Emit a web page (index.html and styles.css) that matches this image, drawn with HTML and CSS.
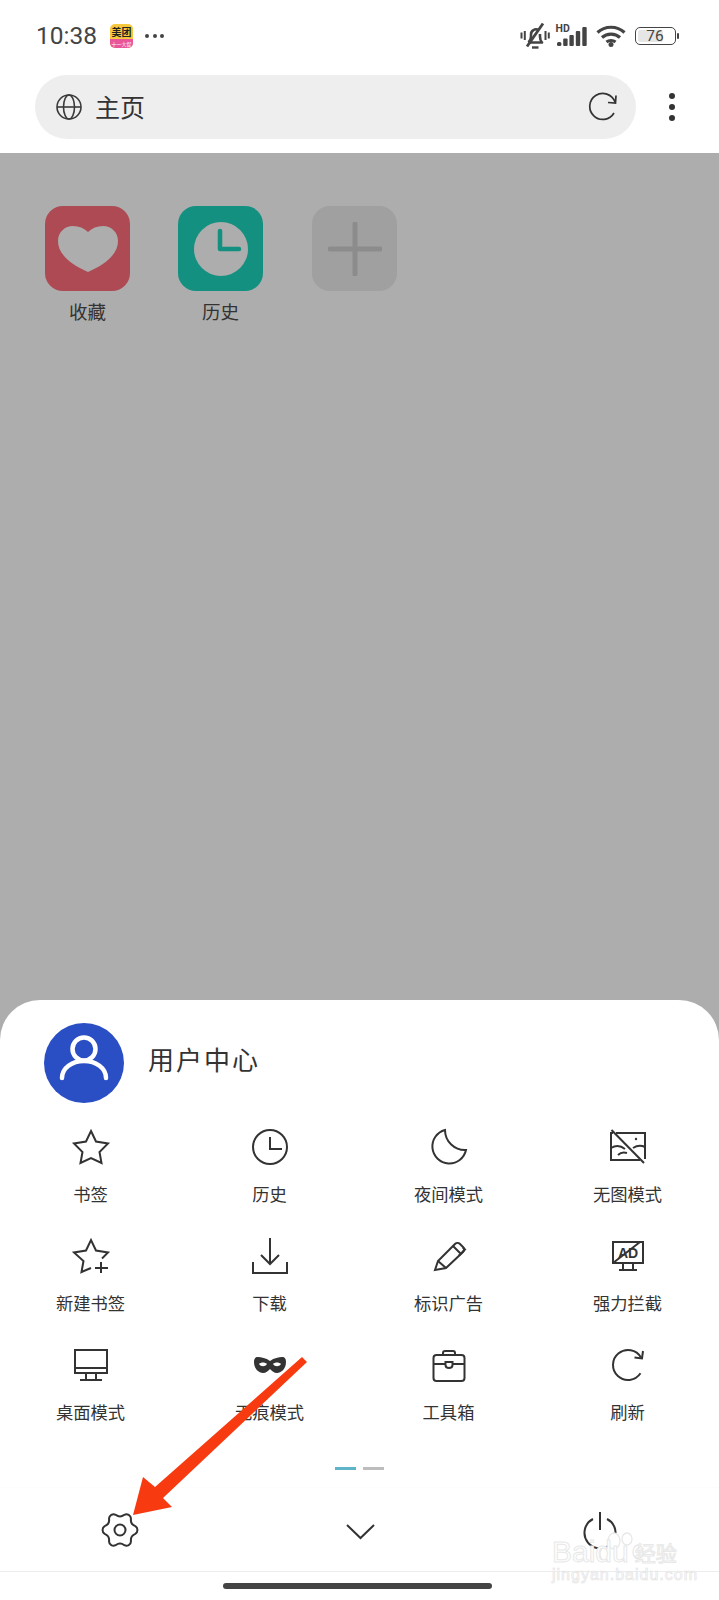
FILE: index.html
```html
<!DOCTYPE html>
<html lang="zh-CN">
<head>
<meta charset="utf-8">
<title>主页</title>
<link rel="stylesheet" href="styles.css">
</head>
<body>
<div class="page">
  <header class="top">
    <div class="status">
      <div class="status-left">
        <span class="time">10:38</span>
        <span class="appicon"><span class="appicon-a">美团</span><span class="appicon-b">十一大促</span></span>
        <span class="more-dots"><i></i><i></i><i></i></span>
      </div>
      <div class="status-right">
        <svg class="s-bell" viewBox="0 0 30 30" width="30" height="30"><path d="M8.500 21.500c1.500-1.500 2.500-3 2.500-6v-2a5 5 0 0 1 7.500-4.500M20 13v2.500c0 3 .5 4.500 2 6H9" fill="none" stroke="#444" stroke-width="2.600" stroke-linejoin="round"/><path d="M7 25.500 23 2.500" stroke="#444" stroke-width="2.800"/><path d="M12 26.500h6.500" stroke="#444" stroke-width="2.400"/><path d="M1.500 11.500v6M4.800 10v9M25.500 10v9M28.800 11.500v6" stroke="#444" stroke-width="2"/></svg>
        <span class="signal">
          <span class="hd">HD</span>
          <svg viewBox="0 0 30 20" width="30" height="20"><rect x="0" y="16" width="4.400" height="4" rx="1.500" fill="#444"/><rect x="6.200" y="12.500" width="4.400" height="7.500" rx="1" fill="#444"/><rect x="12.400" y="9" width="4.400" height="11" rx="1" fill="#444"/><rect x="18.800" y="5" width="4.400" height="15" rx="1" fill="#444"/><rect x="25.300" y="1" width="4.400" height="19" rx="1" fill="#444"/></svg>
        </span>
        <svg class="s-wifi" viewBox="0 0 30 22" width="30" height="22"><path d="M1.500 7.500C9 .5 21 .5 28.500 7.500M6 12.500c5-4.500 13-4.500 18 0M10.500 17c2.500-2 6.500-2 9 0" fill="none" stroke="#444" stroke-width="3.200"/><circle cx="15" cy="19.500" r="2.500" fill="#444"/></svg>
        <span class="battery"><span class="battery-fill"></span><span class="battery-num">76</span></span>
        <span class="battery-nub"></span>
      </div>
    </div>
    <div class="addr-row">
      <div class="addr">
        <svg class="globe" viewBox="0 0 26 26" width="26" height="26" fill="none" stroke="#3a3a3a" stroke-width="1.600"><circle cx="13" cy="13" r="12"/><ellipse cx="13" cy="13" rx="5.500" ry="12"/><path d="M1 13h24"/></svg>
        <span class="addr-text">主页</span>
        <svg class="reload" viewBox="0 0 30 30" width="30" height="30" fill="none" stroke="#333" stroke-width="1.700"><path d="M26 21a13 13 0 1 1 1-11"/><path d="M28 3.500 27.500 11l-7.500-.5"/></svg>
      </div>
      <span class="kebab"><i></i><i></i><i></i></span>
    </div>
  </header>

  <main class="home">
    <div class="tile-wrap">
      <div class="tile tile-red"><svg viewBox="0 0 60 46" width="60" height="46"><path d="M30 46C12 38 0 28 0 15 0 6 7 0 15 0c6 0 11 2 15 6 4-4 9-6 15-6 8 0 15 6 15 15 0 13-12 23-30 31Z" fill="#adadad"/></svg></div>
      <span class="tile-label">收藏</span>
    </div>
    <div class="tile-wrap">
      <div class="tile tile-teal"><svg viewBox="0 0 54 54" width="54" height="54"><circle cx="27" cy="27" r="27" fill="#adadad"/><path d="M26 9v18h19" fill="none" stroke="#149080" stroke-width="4.500" stroke-linecap="round" stroke-linejoin="round"/></svg></div>
      <span class="tile-label">历史</span>
    </div>
    <div class="tile-wrap tile-wrap-add">
      <div class="tile tile-gray"><svg viewBox="0 0 54 54" width="54" height="54"><path d="M27 2v50M2 27h50" stroke="#8c8c8c" stroke-width="5" stroke-linecap="round"/></svg></div>
    </div>
  </main>

  <section class="sheet">
    <div class="user">
      <div class="avatar"><svg class="avatar-ic" viewBox="0 0 50 50" width="50" height="50" fill="none" stroke="#fff" stroke-width="4.500" stroke-linecap="round"><circle cx="25" cy="11" r="11.500"/><path d="M3 40c0-10 10-17 22-17s22 7 22 17"/></svg></div>
      <span class="user-name">用户中心</span>
    </div>
    <div class="grid">
      <div class="cell"><svg class="ic" viewBox="0 0 36 36"><path d="M18 2l5 10.500 12 2-8.500 8.500 2 11L18 29 7.500 34l2-11L1 14.500l12-2Z"/></svg><span class="cell-label">书签</span></div>
      <div class="cell"><svg class="ic" viewBox="0 0 36 36"><circle cx="18" cy="18" r="17"/><path d="M18 8v12h12"/></svg><span class="cell-label">历史</span></div>
      <div class="cell"><svg class="ic" viewBox="0 0 36 36"><path d="M14 1a17 17 0 1 0 21 20A20 20 0 0 1 14 1Z"/></svg><span class="cell-label">夜间模式</span></div>
      <div class="cell"><svg class="ic" viewBox="0 0 36 36"><path d="M6 4h29v26M30 31H1V4h2"/><path d="M1.500 1 34 34"/><path d="M1 19c5-3 9-3 14 1M8 26c3-3 6-3 9-2M23 19c3-2 8-3 12-1"/><circle cx="26" cy="10" r="1.200" fill="#333" stroke="none"/></svg><span class="cell-label">无图模式</span></div>

      <div class="cell"><svg class="ic" viewBox="0 0 36 36"><path d="M18 30 8.500 34l2-11L1 14.500l12-2L18 2l5 10.500 12 2-6 6"/><path d="M28 24v11M22 30h13"/></svg><span class="cell-label">新建书签</span></div>
      <div class="cell"><svg class="ic" viewBox="0 0 36 36"><path d="M18 0v26M9 17l9 9 9-9"/><path d="M1 24v11h34V24"/></svg><span class="cell-label">下载</span></div>
      <div class="cell"><svg class="ic" viewBox="0 0 36 36"><path d="M4 32l3-9L24 6c1.500-1.500 3.500-1.500 5 0l3 3c1.500 1.500 1.500 3.500 0 5L15 30Z"/><path d="M7 23l8 7M22 8l8 8M32 9.500l2 2-6 6"/></svg><span class="cell-label">标识广告</span></div>
      <div class="cell"><svg class="ic" viewBox="0 0 36 36"><path d="M3 4h30v21H3ZM13 25v6M23 25v6M9 32h18"/><path d="M3 25 30 4"/><text class="ic-text" x="18" y="20" text-anchor="middle">AD</text></svg><span class="cell-label">强力拦截</span></div>

      <div class="cell"><svg class="ic" viewBox="0 0 36 36"><path d="M2 3h32v23H2ZM2 21h32M13 26v7M23 26v7M7 33h22"/></svg><span class="cell-label">桌面模式</span></div>
      <div class="cell"><svg class="ic" viewBox="0 0 36 36"><path d="M18 14C14 11 9 10 6 10 3 10 2 12 2 15c0 7 5 11 9 11 3 0 5-2 7-4 2 2 4 4 7 4 4 0 9-4 9-11 0-3-1-5-4-5-3 0-8 1-12 4Zm-11 3c2-2 6-2 8 0-2 3-6 3-8 0Zm22 0c-2-2-6-2-8 0 2 3 6 3 8 0Z" class="ic-fill" fill-rule="evenodd"/></svg><span class="cell-label">无痕模式</span></div>
      <div class="cell"><svg class="ic" viewBox="0 0 36 36"><rect x="2.500" y="8" width="31" height="26" rx="3"/><path d="M12 8V6c0-1 1-2 2-2h8c1 0 2 1 2 2v2M2.500 17h12M21.500 17h12M14.500 15h7v3c0 4-7 4-7 0Z"/></svg><span class="cell-label">工具箱</span></div>
      <div class="cell"><svg class="ic" viewBox="0 0 36 36"><path d="M30.500 26.300A15 15 0 1 1 31 10.500"/><path d="M33 4l-1 7.500-7.500-1"/></svg><span class="cell-label">刷新</span></div>
    </div>
    <div class="pager"><span class="pg pg-on"></span><span class="pg"></span></div>
    <div class="tools">
      <svg class="tool" viewBox="-1 -1 38 38"><path d="M33.330 14.180A4.500 4.500 0 0 1 33.330 21.820 7 7 0 0 0 28.980 29.370 4.500 4.500 0 0 1 22.360 33.190 7 7 0 0 0 13.640 33.190 4.500 4.500 0 0 1 7.020 29.370 7 7 0 0 0 2.670 21.820 4.500 4.500 0 0 1 2.670 14.180 7 7 0 0 0 7.020 6.630 4.500 4.500 0 0 1 13.640 2.810 7 7 0 0 0 22.360 2.810 4.500 4.500 0 0 1 28.980 6.630 7 7 0 0 0 33.330 14.180Z"/><circle cx="18" cy="18" r="5.500"/></svg>
      <svg class="tool" viewBox="-1 -1 38 38"><path d="M5 13l13.500 13L32 13"/></svg>
      <svg class="tool" viewBox="-1 -1 38 38"><path d="M11 7a15.500 15.500 0 1 0 14 0"/><path d="M18 0v18"/></svg>
    </div>
    <div class="nav"><span class="home-bar"></span></div>
  </section>

  <svg class="arrow" viewBox="0 0 180 165" width="180" height="165"><path d="M172 2l5 5L33 143l9 9-39 8 10-38 12 10Z" fill="#f83a10"/></svg>

  <div class="mark">
    <svg class="paw" viewBox="0 0 50 50" width="50" height="50" fill="#fff" stroke="#e8e8e8" stroke-width="1.300"><ellipse cx="11" cy="24" rx="5" ry="7"/><ellipse cx="20" cy="11" rx="6" ry="8"/><ellipse cx="33" cy="9" rx="5" ry="6"/><ellipse cx="44" cy="22" rx="5" ry="7"/></svg>
    <div class="mark-line"><span class="mark-bd">Baidu</span><span class="mark-cn">经验</span></div>
    <div class="mark-url">jingyan.baidu.com</div>
  </div>
</div>
</body>
</html>
```

FILE: styles.css
```css
* { box-sizing: border-box; }
html, body { margin: 0; padding: 0; }
body { font-family: "Noto Sans CJK SC", Roboto, sans-serif; background: #fff; }
.page { position: relative; width: 719px; height: 1600px; overflow: hidden; background: #adadad; display: flex; flex-direction: column; }

.top { height: 153px; background: #fff; flex: none; }
.status { height: 75px; padding: 0 40px 4px 36px; display: flex; align-items: center; justify-content: space-between; }
.status-left, .status-right { display: flex; align-items: center; }
.time { font-family: Roboto, sans-serif; font-size: 24.500px; color: #444; }
.appicon { width: 23px; height: 24px; margin-left: 13px; border-radius: 5px; overflow: hidden; display: flex; flex-direction: column; align-items: center; background: #f6c83e; }
.appicon-a { font-size: 10px; line-height: 15px; height: 15px; font-weight: 700; color: #222; }
.appicon-b { width: 100%; height: 9px; background: #e8559a; color: #fff; font-size: 5px; line-height: 9px; text-align: center; white-space: nowrap; overflow: hidden; }
.more-dots { display: flex; gap: 3.500px; margin-left: 12px; }
.more-dots i { width: 4px; height: 4px; border-radius: 50%; background: #444; }
.s-bell { margin-right: 7px; }
.signal { position: relative; width: 31px; height: 21px; display: flex; align-items: flex-end; margin-right: 8px; }
.hd { position: absolute; left: -1px; top: -2px; font-family: Roboto, sans-serif; font-weight: 700; font-size: 10.500px; line-height: 11px; color: #444; }
.s-wifi { margin-right: 9px; }
.battery { position: relative; width: 41px; height: 18px; border: 1.500px solid #444; border-radius: 5px; display: flex; align-items: center; justify-content: center; }
.battery-fill { position: absolute; left: 2px; top: 2px; bottom: 2px; width: 25px; background: #e6e6e6; border-radius: 2px; }
.battery-num { position: relative; font-family: Roboto, sans-serif; font-size: 15.500px; line-height: 16px; color: #444; }
.battery-nub { width: 2px; height: 6px; margin-left: 1.500px; background: #444; border-radius: 1px; }

.addr-row { display: flex; align-items: center; padding-left: 35px; }
.addr { width: 601px; height: 64px; border-radius: 32px; background: #eee; display: flex; align-items: center; padding: 0 18px 0 21px; }
.globe { flex: none; }
.addr-text { margin-left: 13px; margin-bottom: 2px; font-size: 25px; color: #333; line-height: 32px; flex: 1; }
.reload { flex: none; }
.kebab { margin-left: 33px; display: flex; flex-direction: column; gap: 5px; }
.kebab i { width: 6px; height: 6px; border-radius: 50%; background: #333; }

.home { height: 847px; flex: none; display: flex; align-items: flex-start; padding: 53px 0 0 45px; gap: 48px; }
.tile-wrap { width: 85px; display: flex; flex-direction: column; align-items: center; }
.tile-wrap-add { margin-left: 1px; }
.tile { width: 85px; height: 85px; border-radius: 18px; display: flex; align-items: center; justify-content: center; }
.tile-red { background: #ad4a54; }
.tile-teal { background: #149080; }
.tile-gray { background: #a0a0a0; }
.tile-label { margin-top: 7px; font-size: 18.500px; line-height: 26px; color: #333; }

.sheet { position: relative; height: 600px; flex: none; background: #fff; border-radius: 40px 40px 0 0; display: flex; flex-direction: column; }
.user { display: flex; align-items: center; padding: 23px 0 0 44px; }
.avatar { width: 80px; height: 80px; border-radius: 50%; background: #2a4ec4; display: flex; align-items: center; justify-content: center; }
.avatar-ic { overflow: visible; }
.user-name { margin: 0 0 8px 24px; font-size: 26px; letter-spacing: 2px; color: #333; line-height: 34px; }
.grid { display: grid; grid-template-columns: repeat(4, 179px); grid-auto-rows: 109px; padding: 26px 0 0 1px; }
.cell { display: flex; flex-direction: column; align-items: center; }
.ic { width: 36px; height: 36px; fill: none; stroke: #333; stroke-width: 2; overflow: visible; }
.ic-fill { fill: #333; stroke: none; }
.ic-text { font-family: "Liberation Sans", sans-serif; font-weight: 700; font-size: 14px; fill: #333; stroke: none; }
.cell-label { margin-top: 16px; font-size: 17.300px; line-height: 25px; color: #333; white-space: nowrap; }
.pager { display: flex; gap: 7px; justify-content: center; padding-top: 11px; height: 21px; }
.pg { width: 21px; height: 2.500px; background: #bdbdbd; }
.pg-on { background: #5fb4c9; }
.tools { height: 85px; margin-top: 10px; border-top: 1px solid #fcfcfc; border-bottom: 1px solid #ececec; display: grid; grid-template-columns: repeat(3, 240px); align-items: center; justify-items: center; }
.tool { width: 38px; height: 38px; fill: none; stroke: #333; stroke-width: 2; }
.nav { flex: 1; display: flex; justify-content: center; padding: 11px 4px 0 0; }
.home-bar { width: 269px; height: 6px; background: #444; border-radius: 3px; }

.arrow { position: absolute; left: 130px; top: 1355px; }
.mark { position: absolute; left: 552px; top: 1530px; width: 130px; height: 55px; }
.paw { position: absolute; left: 42px; top: 0; }
.mark-line { position: absolute; left: 0; top: 4px; display: flex; align-items: center; gap: 6px; }
.mark-bd { font-family: "Liberation Sans", sans-serif; font-size: 30px; line-height: 36px; color: #fff; -webkit-text-stroke: 1px #e8e8e8; }
.mark-cn { font-size: 21px; line-height: 36px; color: #fff; -webkit-text-stroke: 1px #e8e8e8; }
.mark-url { position: absolute; left: 0; top: 36px; font-family: "Liberation Sans", sans-serif; font-size: 16px; letter-spacing: 1px; line-height: 18px; color: #fff; -webkit-text-stroke: .7px #e4e4e4; white-space: nowrap; }
```
